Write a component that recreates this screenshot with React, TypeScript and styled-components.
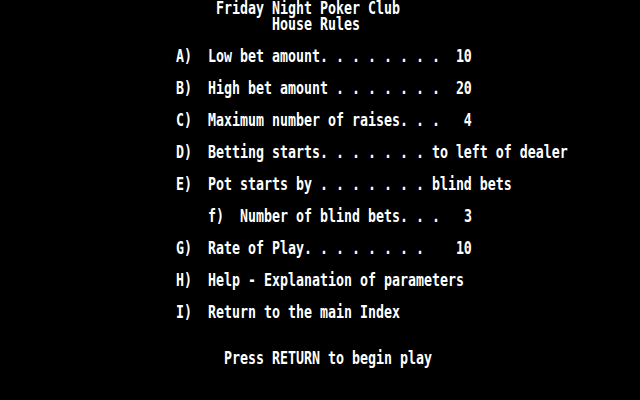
import React from 'react';
import styled, { createGlobalStyle } from 'styled-components';

// text-mode screen: 80 columns x 25 rows, 8x16 cells
const CELL_W = 8;
const CELL_H = 16;

const GlobalStyle = createGlobalStyle`
  html, body {
    margin: 0;
    padding: 0;
    background: #000;
  }
`;

const Screen = styled.div`
  width: 640px;
  height: 400px;
  background: #000;
  color: #fff;
  font-family: 'DejaVu Sans Mono', 'Liberation Mono', monospace;
  font-size: 13.29px;
  font-weight: bold;
  display: flex;
  flex-direction: column;
  overflow: hidden;
`;

// glyphs are stretched vertically like a doubled-scanline bitmap font
const Line = styled.div<{ $col: number }>`
  height: ${CELL_H}px;
  line-height: ${CELL_H}px;
  padding-left: ${(p) => p.$col * CELL_W}px;
  white-space: pre;
  transform: translateY(0.8px) scaleY(1.26);
`;

const Menu = styled.div`
  margin-top: ${CELL_H}px;
  display: flex;
  flex-direction: column;
  gap: ${CELL_H}px;
`;

const Item = styled(Line)`
  display: flex;
`;

const Key = styled.span`
  width: ${4 * CELL_W}px;
  flex: none;
`;

const Prompt = styled(Line)`
  margin-top: 30px;
`;

type Rule = { key: string; text: string; sub?: boolean };

const rules: Rule[] = [
  { key: 'A)', text: 'Low bet amount. . . . . . . .  10' },
  { key: 'B)', text: 'High bet amount . . . . . . .  20' },
  { key: 'C)', text: 'Maximum number of raises. . .   4' },
  { key: 'D)', text: 'Betting starts. . . . . . . to left of dealer' },
  { key: 'E)', text: 'Pot starts by . . . . . . . blind bets' },
  { key: 'f)', text: 'Number of blind bets. . .   3', sub: true },
  { key: 'G)', text: 'Rate of Play. . . . . . . .    10' },
  { key: 'H)', text: 'Help - Explanation of parameters' },
  { key: 'I)', text: 'Return to the main Index' },
];

export default function App() {
  return (
    <>
      <GlobalStyle />
      <Screen>
        <Line $col={27}>Friday Night Poker Club</Line>
        <Line $col={34}>House Rules</Line>
        <Menu>
          {rules.map((r) => (
            <Item key={r.key} $col={r.sub ? 26 : 22}>
              <Key>{r.key}</Key>
              <span>{r.text}</span>
            </Item>
          ))}
        </Menu>
        <Prompt $col={28}>Press RETURN to begin play</Prompt>
      </Screen>
    </>
  );
}
